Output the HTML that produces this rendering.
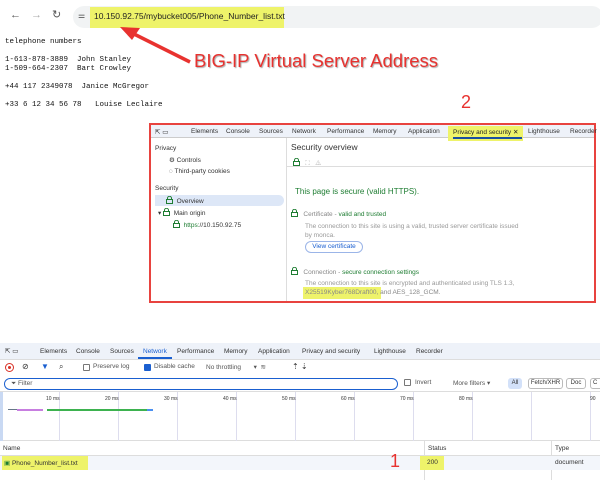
<!DOCTYPE html>
<html><head><meta charset="utf-8"><style>
*{margin:0;padding:0;box-sizing:border-box}
body{width:600px;height:480px;background:#fff;position:relative;overflow:hidden;font-family:"Liberation Sans",sans-serif;font-size:7px;color:#333}
.a{position:absolute;white-space:pre}
.mono{font-family:"Liberation Mono",monospace;font-size:7.5px;color:#111}
.tab{position:absolute;font-size:6.5px;color:#333;white-space:pre}
.g{color:#1e7d32}
.lk{display:inline-block;width:7px;height:8px;vertical-align:-1px}
</style></head><body>
<svg width="0" height="0" style="position:absolute"><symbol id="L" viewBox="0 0 7 8"><path d="M1.5 3.5V2.3a2 2 0 0 1 4 0v1.2" fill="none" stroke="#1e7d32" stroke-width="1"/><rect x="0.5" y="3.5" width="6" height="4" fill="none" stroke="#1e7d32" stroke-width="1"/></symbol></svg>
<div class="a" style="left:10px;top:9px;font-size:11px;color:#555">←</div>
<div class="a" style="left:31px;top:9px;font-size:11px;color:#aaa">→</div>
<div class="a" style="left:52px;top:8px;font-size:11px;color:#555">↻</div>
<div class="a" style="left:73px;top:6px;width:530px;height:22px;border-radius:11px;background:#f1f3f4"></div>
<div class="a" style="left:78px;top:11px;font-size:8px;color:#444">⚌</div>
<div class="a" style="left:90px;top:7px;width:194px;height:21px;background:#eef36a"></div>
<div class="a" style="left:94px;top:11px;font-size:8.5px;color:#222">10.150.92.75/mybucket005/Phone_Number_list.txt</div>
<div class="a mono" style="left:5px;top:38px">telephone numbers</div>
<div class="a mono" style="left:5px;top:56px">1-613-878-3889  John Stanley</div>
<div class="a mono" style="left:5px;top:65px">1-509-664-2307  Bart Crowley</div>
<div class="a mono" style="left:5px;top:83px">+44 117 2349078  Janice McGregor</div>
<div class="a mono" style="left:5px;top:101px">+33 6 12 34 56 78   Louise Leclaire</div>
<svg class="a" style="left:0;top:0" width="600" height="120"><line x1="190" y1="62" x2="132" y2="33" stroke="#e8322f" stroke-width="3.5"/><polygon points="120,27 140,28 132,40" fill="#e8322f"/></svg>
<div class="a" style="left:194px;top:50px;font-size:18.5px;color:#e8322f;text-shadow:1px 1px 1px #aaa">BIG-IP Virtual Server Address</div>
<div class="a" style="left:461px;top:92px;font-size:18px;color:#e8322f">2</div>
<div class="a" style="left:149px;top:123px;width:447px;height:180px;border:2px solid #e8433f;background:#fff">
 <div class="a" style="left:0;top:0;width:443px;height:13px;background:#eef2f9;border-bottom:1px solid #ccc"></div>
 <div class="tab" style="left:4px;top:3px">⇱ ▭</div>
 <div class="tab" style="left:40px;top:3px">Elements</div>
 <div class="tab" style="left:75px;top:3px">Console</div>
 <div class="tab" style="left:108px;top:3px">Sources</div>
 <div class="tab" style="left:141px;top:3px">Network</div>
 <div class="tab" style="left:176px;top:3px">Performance</div>
 <div class="tab" style="left:222px;top:3px">Memory</div>
 <div class="tab" style="left:257px;top:3px">Application</div>
 <div class="a" style="left:297px;top:1px;width:75px;height:15px;background:#eef36a"></div>
 <div class="tab" style="left:302px;top:3px;color:#222">Privacy and security ✕</div>
 <div class="a" style="left:302px;top:12px;width:69px;height:1.5px;background:#1a4fa0"></div>
 <div class="tab" style="left:377px;top:3px">Lighthouse</div>
 <div class="tab" style="left:419px;top:3px">Recorder</div>
 <div class="a" style="left:135px;top:13px;width:1px;height:163px;background:#ddd"></div>
 <div class="tab" style="left:4px;top:20px">Privacy</div>
 <div class="tab" style="left:18px;top:31px">⚙ Controls</div>
 <div class="tab" style="left:18px;top:43px">◌ Third-party cookies</div>
 <div class="tab" style="left:4px;top:60px">Security</div>
 <div class="a" style="left:4px;top:70px;width:129px;height:11px;background:#dde7f7;border-radius:0 6px 6px 0"></div>
 <div class="tab" style="left:15px;top:71px"><svg class="lk"><use href="#L"/></svg>  Overview</div>
 <div class="tab" style="left:7px;top:83px">▾ <svg class="lk"><use href="#L"/></svg>  Main origin</div>
 <div class="tab" style="left:22px;top:95px"><svg class="lk"><use href="#L"/></svg>  <span class="g">https:</span>//10.150.92.75</div>
 <div class="a" style="left:136px;top:13px;width:307px;height:29px;border-bottom:1px solid #ddd"></div>
 <div class="a" style="left:140px;top:17px;font-size:8.5px;color:#333">Security overview</div>
 <div class="tab" style="left:142px;top:33px"><svg class="lk"><use href="#L"/></svg>   <span style="color:#bbb">⛶   ⚠</span></div>
 <div class="a g" style="left:144px;top:62px;font-size:8px">This page is secure (valid HTTPS).</div>
 <div class="tab" style="left:140px;top:84px;color:#888"><svg class="lk"><use href="#L"/></svg>   Certificate - <span class="g">valid and trusted</span></div>
 <div class="tab" style="left:154px;top:98px;color:#999">The connection to this site is using a valid, trusted server certificate issued</div>
 <div class="tab" style="left:154px;top:107px;color:#999">by monca.</div>
 <div class="a" style="left:154px;top:116px;width:58px;height:12px;border:1px solid #9bb5e8;border-radius:6px;font-size:6.5px;color:#1a5fd0;text-align:center;line-height:10px">View certificate</div>
 <div class="tab" style="left:140px;top:142px;color:#888"><svg class="lk"><use href="#L"/></svg>   Connection - <span class="g">secure connection settings</span></div>
 <div class="tab" style="left:154px;top:155px;color:#999">The connection to this site is encrypted and authenticated using TLS 1.3,</div>
 <div class="a" style="left:152px;top:162px;width:78px;height:12px;background:#eef36a"></div>
 <div class="tab" style="left:154px;top:164px;color:#888">X25519Kyber768Draft00, and AES_128_GCM.</div>
</div>
<div class="a" style="left:0;top:343px;width:600px;height:17px;background:#eef2f9;border-bottom:1px solid #ddd"></div>
<div class="tab" style="left:5px;top:347px">⇱ ▭</div>
<div class="tab" style="left:40px;top:348px">Elements</div>
<div class="tab" style="left:76px;top:348px">Console</div>
<div class="tab" style="left:110px;top:348px">Sources</div>
<div class="tab" style="left:143px;top:348px;color:#1a5fd0">Network</div>
<div class="a" style="left:138px;top:357px;width:34px;height:2px;background:#1a5fd0"></div>
<div class="tab" style="left:177px;top:348px">Performance</div>
<div class="tab" style="left:224px;top:348px">Memory</div>
<div class="tab" style="left:258px;top:348px">Application</div>
<div class="tab" style="left:302px;top:348px">Privacy and security</div>
<div class="tab" style="left:374px;top:348px">Lighthouse</div>
<div class="tab" style="left:416px;top:348px">Recorder</div>
<div class="a" style="left:5px;top:363px;width:9px;height:9px;border:1.5px solid #d93025;border-radius:50%"><div style="margin:1.5px;width:3px;height:3px;background:#d93025;border-radius:50%"></div></div>
<div class="tab" style="left:22px;top:362px;font-size:8px">⊘</div>
<div class="tab" style="left:41px;top:362px;color:#1a5fd0;font-size:8px">▼</div>
<div class="tab" style="left:59px;top:362px;font-size:8px">⌕</div>
<div class="a" style="left:83px;top:364px;width:7px;height:7px;border:1px solid #777;border-radius:1px"></div>
<div class="tab" style="left:93px;top:363px;color:#555">Preserve log</div>
<div class="a" style="left:144px;top:364px;width:7px;height:7px;background:#1a5fd0;border-radius:1px"></div>
<div class="tab" style="left:154px;top:363px;color:#555">Disable cache</div>
<div class="tab" style="left:206px;top:363px;color:#555">No throttling       ▾  ≋</div>
<div class="tab" style="left:292px;top:362px;font-size:8px">⇡ ⇣</div>
<div class="a" style="left:0;top:376px;width:600px;height:16px;background:#fff;border-bottom:1px solid #ddd"></div>
<div class="a" style="left:4px;top:378px;width:394px;height:12px;border:1.5px solid #1a5fd0;border-radius:6px;font-size:6.5px;color:#555;padding-left:6px;line-height:9px">⏷ Filter</div>
<div class="a" style="left:404px;top:379px;width:7px;height:7px;border:1px solid #777;border-radius:1px"></div>
<div class="tab" style="left:415px;top:379px;color:#555">Invert</div>
<div class="tab" style="left:453px;top:379px;color:#555">More filters ▾</div>
<div class="a" style="left:508px;top:378px;width:14px;height:11px;background:#d3e1f9;border-radius:3px;font-size:6px;text-align:center;line-height:11px">All</div>
<div class="a" style="left:528px;top:378px;width:35px;height:11px;border:1px solid #bbb;border-radius:3px;font-size:6px;text-align:center;line-height:9px">Fetch/XHR</div>
<div class="a" style="left:566px;top:378px;width:20px;height:11px;border:1px solid #bbb;border-radius:3px;font-size:6px;text-align:center;line-height:9px">Doc</div>
<div class="a" style="left:590px;top:378px;width:14px;height:11px;border:1px solid #bbb;border-radius:3px;font-size:6px;line-height:9px;padding-left:2px">C</div>
<div class="a" style="left:0;top:392px;width:600px;height:49px;border-bottom:1px solid #ddd"></div>
<div class="a" style="left:0;top:392px;width:3px;height:49px;background:#c9d9f3"></div>
<div class="a" style="left:59px;top:392px;width:1px;height:49px;background:#dde"></div>
<div class="a" style="left:118px;top:392px;width:1px;height:49px;background:#dde"></div>
<div class="a" style="left:177px;top:392px;width:1px;height:49px;background:#dde"></div>
<div class="a" style="left:236px;top:392px;width:1px;height:49px;background:#dde"></div>
<div class="a" style="left:295px;top:392px;width:1px;height:49px;background:#dde"></div>
<div class="a" style="left:354px;top:392px;width:1px;height:49px;background:#dde"></div>
<div class="a" style="left:413px;top:392px;width:1px;height:49px;background:#dde"></div>
<div class="a" style="left:472px;top:392px;width:1px;height:49px;background:#dde"></div>
<div class="a" style="left:531px;top:392px;width:1px;height:49px;background:#dde"></div>
<div class="a" style="left:590px;top:392px;width:1px;height:49px;background:#dde"></div>
<div class="a" style="font-size:5px;left:46px;top:396px">10 ms</div>
<div class="a" style="font-size:5px;left:105px;top:396px">20 ms</div>
<div class="a" style="font-size:5px;left:164px;top:396px">30 ms</div>
<div class="a" style="font-size:5px;left:223px;top:396px">40 ms</div>
<div class="a" style="font-size:5px;left:282px;top:396px">50 ms</div>
<div class="a" style="font-size:5px;left:341px;top:396px">60 ms</div>
<div class="a" style="font-size:5px;left:400px;top:396px">70 ms</div>
<div class="a" style="font-size:5px;left:459px;top:396px">80 ms</div>
<div class="a" style="font-size:5px;left:590px;top:396px">90</div>
<div class="a" style="left:8px;top:409px;width:10px;height:1px;background:#678"></div>
<div class="a" style="left:17px;top:409px;width:26px;height:1.5px;background:#c77ee0"></div>
<div class="a" style="left:47px;top:409px;width:100px;height:1.5px;background:#3db24f"></div>
<div class="a" style="left:147px;top:409px;width:6px;height:1.5px;background:#4a8ff0"></div>
<div class="a" style="left:0;top:441px;width:600px;height:15px;background:#fff;border-bottom:1px solid #ddd"></div>
<div class="a" style="left:424px;top:441px;width:1px;height:39px;background:#ddd"></div>
<div class="a" style="left:551px;top:441px;width:1px;height:39px;background:#ddd"></div>
<div class="tab" style="left:3px;top:445px">Name</div>
<div class="tab" style="left:428px;top:445px">Status</div>
<div class="tab" style="left:555px;top:445px">Type</div>
<div class="a" style="left:0;top:456px;width:600px;height:14px;background:#f3f6fb"></div>
<div class="a" style="left:2px;top:456px;width:86px;height:14px;background:#eef36a"></div>
<div class="tab" style="left:4px;top:459px"><span class="g">▣</span> Phone_Number_list.txt</div>
<div class="a" style="left:420px;top:456px;width:24px;height:14px;background:#eef36a"></div>
<div class="tab" style="left:427px;top:459px">200</div>
<div class="tab" style="left:555px;top:459px">document</div>
<div class="a" style="left:390px;top:451px;font-size:18px;color:#e8322f">1</div>
</body></html>
